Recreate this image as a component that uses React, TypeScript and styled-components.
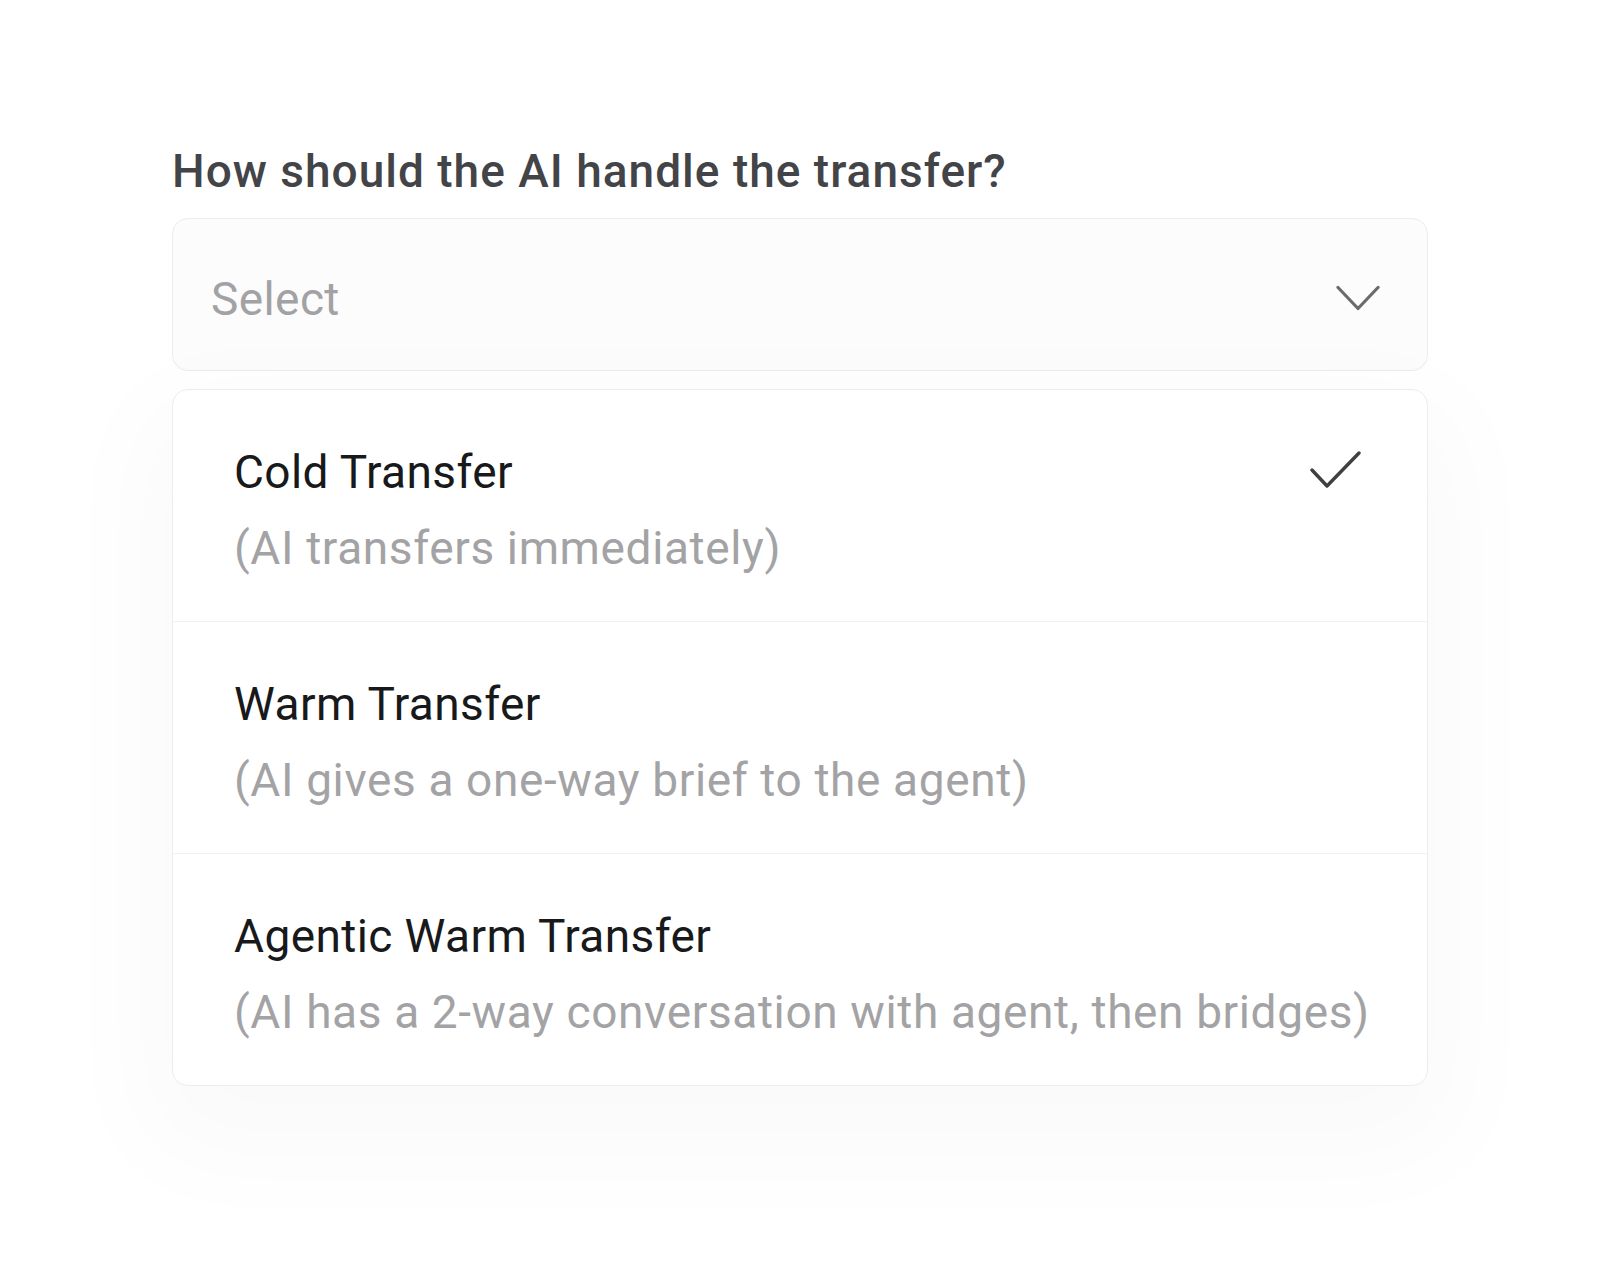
import * as React from 'react'
import styled, { createGlobalStyle } from 'styled-components'

const GlobalStyle = createGlobalStyle`
  html, body {
    margin: 0;
    padding: 0;
    background: #ffffff;
  }
  body {
    font-family: Roboto, 'Liberation Sans', Arial, sans-serif;
    -webkit-font-smoothing: antialiased;
  }
`

type Option = {
  id: string
  label: string
  hint: string
}

const OPTIONS: Option[] = [
  { id: 'cold', label: 'Cold Transfer', hint: '(AI transfers immediately)' },
  { id: 'warm', label: 'Warm Transfer', hint: '(AI gives a one-way brief to the agent)' },
  {
    id: 'agentic',
    label: 'Agentic Warm Transfer',
    hint: '(AI has a 2-way conversation with agent, then bridges)',
  },
]

const Page = styled.main`
  min-height: 1274px;
  box-sizing: border-box;
  padding: 143px 172px 0;
`

const Field = styled.section`
  display: flex;
  flex-direction: column;
  width: 1256px;
`

const Question = styled.h2`
  margin: 0 0 19px;
  font-size: 46px;
  line-height: 56px;
  font-weight: 500;
  letter-spacing: 1px;
  color: #434448;
`

const Trigger = styled.button`
  display: flex;
  align-items: center;
  justify-content: space-between;
  box-sizing: border-box;
  height: 153px;
  padding: 8px 47px 0 38px;
  border: 1.5px solid #ececec;
  border-radius: 16px;
  background: #fcfcfc;
  font: inherit;
  cursor: pointer;
`

const Placeholder = styled.span`
  font-size: 46px;
  line-height: 56px;
  letter-spacing: 0.4px;
  color: #a2a2a4;
`

const Chevron = styled.svg`
  width: 44px;
  height: 26px;
  margin-top: -2px;
  color: #6b6b6d;
`

const Menu = styled.ul`
  list-style: none;
  margin: 18px 0 0;
  padding: 0;
  border: 1.5px solid #ededed;
  border-radius: 16px;
  background: #ffffff;
  box-shadow: 0 40px 110px 30px rgba(0, 0, 0, 0.025);
  overflow: hidden;
`

const Item = styled.li<{ $last?: boolean }>`
  display: flex;
  align-items: flex-start;
  justify-content: space-between;
  padding: 54px 66px 45px 61px;
  border-bottom: ${(p) => (p.$last ? 'none' : '1.5px solid #f1f1f1')};
  cursor: pointer;
`

const ItemText = styled.div`
  display: flex;
  flex-direction: column;
  gap: 20px;
  white-space: nowrap;
`

const Label = styled.span`
  font-size: 46px;
  line-height: 56px;
  letter-spacing: 0.4px;
  color: #18191b;
`

const Hint = styled.span`
  font-size: 46px;
  line-height: 56px;
  letter-spacing: 0.62px;
  color: #a3a3a5;
`

const Check = styled.svg`
  flex-shrink: 0;
  width: 52px;
  height: 40px;
  margin-top: 6px;
  color: #404043;
`

export default function App() {
  const [selected] = React.useState('cold')

  return (
    <>
      <GlobalStyle />
      <Page>
        <Field>
          <Question>How should the AI handle the transfer?</Question>
          <Trigger type='button'>
            <Placeholder>Select</Placeholder>
            <Chevron viewBox='0 0 44 26' fill='none'>
              <path
                d='M2 2.5 L22 23.5 L42 2.5'
                stroke='currentColor'
                strokeWidth='3.2'
                strokeLinecap='round'
                strokeLinejoin='round'
              />
            </Chevron>
          </Trigger>
          <Menu>
            {OPTIONS.map((opt, i) => (
              <Item key={opt.id} $last={i === OPTIONS.length - 1}>
                <ItemText>
                  <Label>{opt.label}</Label>
                  <Hint>{opt.hint}</Hint>
                </ItemText>
                {selected === opt.id && (
                  <Check viewBox='0 0 52 40' fill='none'>
                    <path
                      d='M3 20 L18 36 L50 3'
                      stroke='currentColor'
                      strokeWidth='3.4'
                      strokeLinecap='round'
                      strokeLinejoin='round'
                    />
                  </Check>
                )}
              </Item>
            ))}
          </Menu>
        </Field>
      </Page>
    </>
  )
}
